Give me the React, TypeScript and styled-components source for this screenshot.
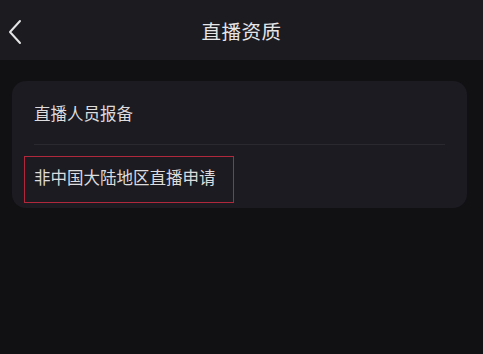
import React from 'react'
import styled, { createGlobalStyle } from 'styled-components'

const GlobalStyle = createGlobalStyle`
  html, body {
    margin: 0;
    padding: 0;
    background: #111113;
    font-family: "Noto Sans CJK SC", "Noto Sans", sans-serif;
  }
`

const Page = styled.div`
  width: 483px;
  height: 354px;
  background: #111113;
  display: flex;
  flex-direction: column;
`

const Header = styled.header`
  position: relative;
  height: 60px;
  background: #1c1b20;
  display: flex;
  align-items: center;
  justify-content: center;
  flex-shrink: 0;
`

const BackButton = styled.button`
  position: absolute;
  left: 4px;
  top: 17px;
  width: 22px;
  height: 30px;
  padding: 0;
  border: none;
  background: none;
  display: flex;
  align-items: center;
  justify-content: center;
`

const Title = styled.h1`
  margin: 0;
  font-size: 19.5px;
  font-weight: 400;
  color: #e6e6e8;
  letter-spacing: 0.5px;
`

const Body = styled.main`
  padding: 21px 16px 0 12px;
`

const Card = styled.section`
  background: #1c1b21;
  border-radius: 14px;
  padding: 0 22px;
  display: flex;
  flex-direction: column;
`

const Row = styled.div<{ $divider?: boolean }>`
  position: relative;
  height: 63px;
  display: flex;
  align-items: center;
  font-size: 16.5px;
  color: #dcdcde;
  border-bottom: ${({ $divider }) => ($divider ? '1px solid #2a292f' : 'none')};
`

const Highlight = styled.span`
  position: absolute;
  left: -10px;
  top: 11px;
  width: 208px;
  height: 45px;
  border: 1px solid #b0283c;
  pointer-events: none;
`

const ChevronLeft = () => (
  <svg width="14" height="26" viewBox="0 0 14 26" fill="none">
    <path d="M12 2L2 13L12 24" stroke="#e4e4e6" strokeWidth="2" strokeLinecap="round" strokeLinejoin="round" />
  </svg>
)

export default function App() {
  return (
    <Page>
      <GlobalStyle />
      <Header>
        <BackButton aria-label="返回">
          <ChevronLeft />
        </BackButton>
        <Title>直播资质</Title>
      </Header>
      <Body>
        <Card>
          <Row $divider>直播人员报备</Row>
          <Row>
            非中国大陆地区直播申请
            <Highlight />
          </Row>
        </Card>
      </Body>
    </Page>
  )
}
